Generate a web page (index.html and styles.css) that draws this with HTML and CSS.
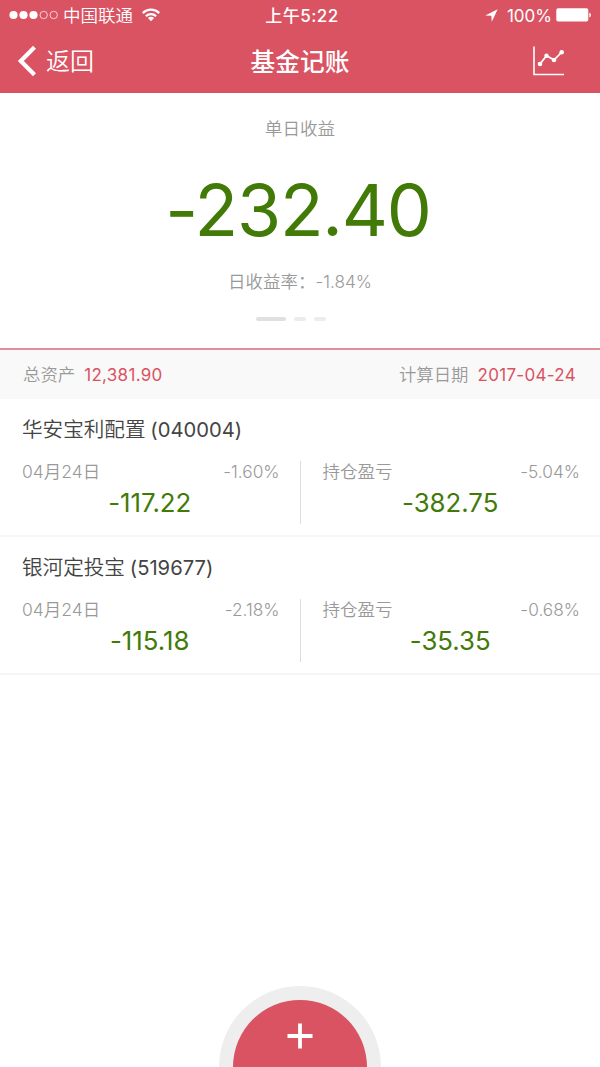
FILE: index.html
```html
<!DOCTYPE html>
<html lang="zh-CN">
<head>
    <meta charset="UTF-8">
    <meta name="viewport" content="width=device-width, initial-scale=1.0">
    <title>基金记账</title>
    <link rel="stylesheet" href="styles.css">
</head>
<body>
    <header class="header">
        <div class="status-bar">
            <div class="status-left">
                <svg class="signal" width="49" height="10" viewBox="0 0 49 10">
                    <g fill="#fff">
                        <circle cx="4.5" cy="5" r="4.1"/>
                        <circle cx="14.5" cy="5" r="4.1"/>
                        <circle cx="24.5" cy="5" r="4.1"/>
                    </g>
                    <g fill="none" stroke="#fff" stroke-width="0.7">
                        <circle cx="34.7" cy="5" r="3.7"/>
                        <circle cx="44.7" cy="5" r="3.7"/>
                    </g>
                </svg>
                <span class="carrier">中国联通</span>
                <svg class="wifi" width="18" height="14" viewBox="0 0 18 14">
                    <g fill="none" stroke="#fff" stroke-width="2.2">
                        <path d="M0.8 5.1a11.6 11.6 0 0 1 16.4 0"/>
                        <path d="M3.9 8.3a7.2 7.2 0 0 1 10.2 0"/>
                    </g>
                    <path d="M9 13.2 5.9 10.1a4.4 4.4 0 0 1 6.2 0z" fill="#fff"/>
                </svg>
            </div>
            <div class="status-time">上午5:22</div>
            <div class="status-right">
                <svg width="13" height="13" viewBox="0 0 13 13">
                    <path d="M12.7 0.3 0.2 6.4l6.1 0.3 0.5 6.1z" fill="#fff"/>
                </svg>
                <span class="percent">100%</span>
                <svg width="36" height="14" viewBox="0 0 36 14">
                    <rect x="0.3" y="0.3" width="32" height="13.2" rx="1.8" fill="#fff"/>
                    <path d="M33.3 4.7c2.2 0.7 2.2 4 0 4.7z" fill="#fff"/>
                </svg>
            </div>
        </div>
        <nav class="nav">
            <a class="back">
                <svg width="19" height="32" viewBox="0 0 19 32">
                    <path d="M17.5 2.3 3.8 16l13.7 13.7" fill="none" stroke="#fff" stroke-width="4.2"/>
                </svg>
                <span>返回</span>
            </a>
            <h1>基金记账</h1>
            <a class="chart">
                <svg width="32" height="30" viewBox="0 0 32 30">
                    <g fill="none" stroke="#fff">
                        <path d="M1 0.5v28h30" stroke-width="1.6"/>
                        <path d="M7 18 13.5 9.7 21 14 28.7 6.2" stroke-width="1.7"/>
                    </g>
                    <g fill="#fff">
                        <circle cx="7" cy="18" r="2.3"/>
                        <circle cx="13.5" cy="9.7" r="2.2"/>
                        <circle cx="21" cy="14" r="2.3"/>
                        <circle cx="28.7" cy="6.2" r="2.3"/>
                    </g>
                </svg>
            </a>
        </nav>
    </header>

    <!-- 单日收益 -->
    <section class="summary">
        <div class="summary-label">单日收益</div>
        <div class="summary-value">-232.40</div>
        <div class="summary-rate">日收益率：<span>-1.84%</span></div>
        <div class="pager">
            <i class="active"></i>
            <i></i>
            <i></i>
        </div>
    </section>

    <section class="info-bar">
        <div>总资产<span class="assets">12,381.90</span></div>
        <div>计算日期<span class="date">2017-04-24</span></div>
    </section>

    <!-- 基金列表 -->
    <section class="fund">
        <h2>华安宝利配置 <span>(040004)</span></h2>
        <div class="fund-body">
            <div class="fund-col">
                <div class="fund-row"><span class="day">04月24日</span><span class="pct">-1.60%</span></div>
                <div class="amount">-117.22</div>
            </div>
            <div class="fund-col">
                <div class="fund-row"><span>持仓盈亏</span><span class="pct">-5.04%</span></div>
                <div class="amount">-382.75</div>
            </div>
        </div>
    </section>
    <section class="fund">
        <h2>银河定投宝 <span>(519677)</span></h2>
        <div class="fund-body">
            <div class="fund-col">
                <div class="fund-row"><span class="day">04月24日</span><span class="pct">-2.18%</span></div>
                <div class="amount">-115.18</div>
            </div>
            <div class="fund-col">
                <div class="fund-row"><span>持仓盈亏</span><span class="pct">-0.68%</span></div>
                <div class="amount">-35.35</div>
            </div>
        </div>
    </section>

    <div class="add-btn">
        <svg width="26" height="26" viewBox="0 0 26 26">
            <path d="M13 0.5v25M0.5 13h25" stroke="#fff" stroke-width="3.8"/>
        </svg>
    </div>
</body>
</html>
```

FILE: styles.css
```css
:root {
    --red: #d95362;
    --green: #427a08;
    --gray: #999;
}

* {
    box-sizing: border-box;
}

body {
    position: relative;
    height: 1067px;
    margin: 0;
    background: #fff;
    color: var(--gray);
    font-family: Inter, "Noto Sans CJK SC", sans-serif;
    font-size: 17px;
    font-weight: 350;
    font-feature-settings: "calt" 0;
}

h1,
h2 {
    margin: 0;
}

/* 顶部 */
.header {
    height: 93px;
    background: var(--red);
    color: #fff;
}

.status-bar {
    display: grid;
    grid-template-columns: 1fr auto 1fr;
    height: 30px;
    padding: 0 8px 0 9px;
    line-height: 32px;
}

.status-left,
.status-right {
    display: flex;
    align-items: center;
    height: 30px;
}

.status-right {
    justify-content: flex-end;
}

.carrier {
    margin: 2px 9px 0 5px;
    font-size: 17.5px;
}

.status-time {
    padding-left: 3px;
    font-size: 17px;
    font-weight: 500;
    letter-spacing: 0.5px;
}

.percent {
    margin: 1px 4px 0 9px;
    font-weight: 400;
}

.nav {
    display: grid;
    grid-template-columns: 1fr auto 1fr;
    align-items: center;
    height: 62px;
    padding: 0 35px 0 17px;
}

.back {
    display: flex;
    align-items: center;
    gap: 10px;
    font-size: 24px;
    line-height: 32px;
}

.back span {
    margin-top: 1px;
}

.nav h1 {
    padding-bottom: 3px;
    margin: 0 -9px 0 9px;
    font-size: 24.7px;
    font-weight: 500;
}

.chart {
    display: flex;
    justify-content: flex-end;
}

/* 收益 */
.summary {
    display: flex;
    flex-direction: column;
    align-items: center;
    height: 257px;
    border-bottom: 2px solid #df8f9a;
}

.summary-label {
    margin-top: 21px;
    font-size: 17.6px;
    line-height: 30px;
}

.summary-value {
    margin-top: 21px;
    margin-right: 4px;
    color: var(--green);
    font-size: 71.5px;
    font-weight: 400;
    letter-spacing: -1.2px;
    line-height: 90px;
}

.summary-rate {
    margin-top: 12px;
    font-size: 17.5px;
    line-height: 30px;
}

.summary-rate span {
    font-size: 17.2px;
}

.pager {
    display: flex;
    gap: 8px;
    margin-top: 20px;
    margin-right: 18px;
}

.pager i {
    width: 12px;
    height: 4px;
    border-radius: 2px;
    background: #ececec;
}

.pager .active {
    width: 30px;
    background: #e0e0e0;
}

.info-bar {
    display: flex;
    justify-content: space-between;
    height: 49px;
    padding: 0 24px 0 23px;
    background: #f9f9f9;
    font-size: 17.4px;
    line-height: 49px;
}

.info-bar span {
    margin-left: 9px;
    color: var(--red);
    font-size: 17px;
    font-weight: 400;
    letter-spacing: 0.3px;
}

/* 基金 */
.fund {
    height: 138px;
    padding-top: 16px;
    border-bottom: 2px solid #f6f6f6;
}

.fund h2 {
    padding-left: 22px;
    color: #444;
    font-size: 20.6px;
    font-weight: 350;
    line-height: 30px;
}

.fund h2 span {
    margin-left: -1px;
    font-size: 20.2px;
    font-weight: 400;
}

.fund-body {
    display: flex;
    margin-top: 16px;
}

.fund-col {
    flex: 1;
    height: 63px;
    padding: 0 20px 0 22px;
}

.fund-col + .fund-col {
    border-left: 1px solid #ddd;
}

.fund-row {
    display: flex;
    justify-content: space-between;
    font-size: 17.5px;
    line-height: 22px;
}

.pct {
    font-size: 17.3px;
}

.amount {
    margin: 4px 2px 0 0;
    color: var(--green);
    font-size: 25.8px;
    font-weight: 400;
    line-height: 32px;
    text-align: center;
}

/* 添加按钮 */
.add-btn {
    position: absolute;
    bottom: 0;
    left: 219px;
    width: 162px;
    height: 81px;
    padding-top: 23px;
    border: 14px solid #eee;
    border-bottom: 0;
    border-radius: 81px 81px 0 0;
    background: var(--red);
    text-align: center;
}
```
